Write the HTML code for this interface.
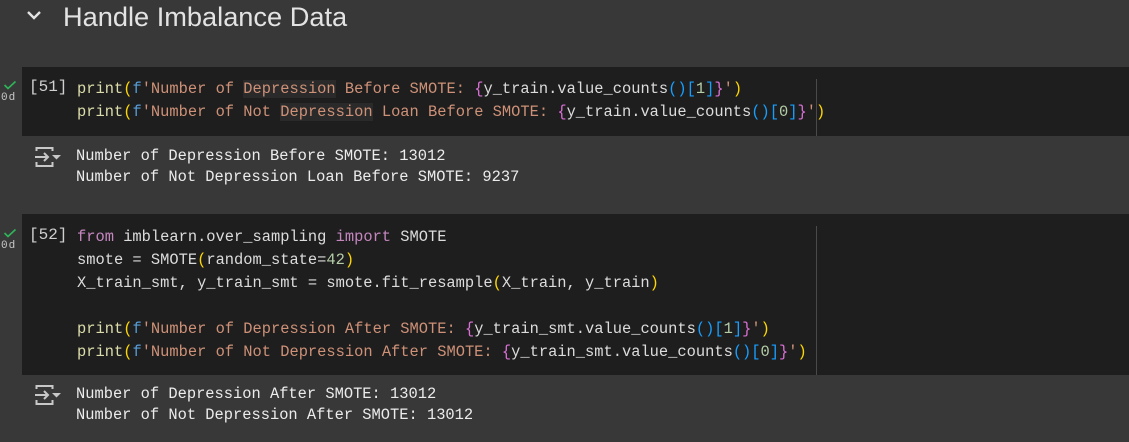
<!DOCTYPE html>
<html><head><meta charset="utf-8"><style>
body{margin:0;width:1129px;height:442px;background:#383838;overflow:hidden;position:relative;font-family:"Liberation Mono",monospace;}
.h{position:absolute;left:63px;top:0px;font-family:"Liberation Sans",sans-serif;font-size:27.2px;color:#e3e3e3;line-height:34px;}
.cell{position:absolute;left:22px;right:0;background:#1e1e1e;}
.ruler{position:absolute;left:816px;width:1px;background:#4a4a4a;}
.code{position:absolute;left:77px;font-size:15.4px;line-height:23px;color:#dcdcdc;white-space:pre;}
.out{position:absolute;left:76px;font-size:15.4px;line-height:21px;color:#ececec;white-space:pre;}
.num{position:absolute;left:29px;font-size:16px;color:#cfcfcf;}
.od{position:absolute;left:1px;font-size:11px;color:#c8c8c8;letter-spacing:1px;}
.fn{color:#dcdcaa}.p{color:#ffd700}.f{color:#569cd6}.s{color:#ce9178}.b{color:#da70d6}.bl{color:#179fff}.n{color:#b5cea8}.k{color:#c586c0}
.hl{background:#2a2a2a}
</style></head><body>
<svg style="position:absolute;left:26px;top:10px" width="16" height="11"><path d="M2 2 L8 8 L14 2" stroke="#e3e3e3" stroke-width="2.4" fill="none"/></svg>
<div class="h">Handle Imbalance Data</div>

<div class="cell" style="top:67px;height:69px"></div>
<div class="ruler" style="top:79px;height:57px"></div>
<svg style="position:absolute;left:3px;top:80px" width="14" height="10"><path d="M1.5 5 L5 8.5 L12.5 1.5" stroke="#2fb45a" stroke-width="1.6" fill="none"/></svg>
<div class="od" style="top:92px">0d</div>
<div class="num" style="top:78px">[51]</div>
<div class="code" style="top:78px"><span class="fn">print</span><span class="p">(</span><span class="f">f</span><span class="s">'Number of <span class="hl">Depression</span> Before SMOTE: </span><span class="b">{</span>y_train.value_counts<span class="bl">()[</span><span class="n">1</span><span class="bl">]</span><span class="b">}</span><span class="s">'</span><span class="p">)</span>
<span class="fn">print</span><span class="p">(</span><span class="f">f</span><span class="s">'Number of Not <span class="hl">Depression</span> Loan Before SMOTE: </span><span class="b">{</span>y_train.value_counts<span class="bl">()[</span><span class="n">0</span><span class="bl">]</span><span class="b">}</span><span class="s">'</span><span class="p">)</span></div>

<svg style="position:absolute;left:34px;top:146px" width="28" height="22" fill="none" stroke="#c8c8c8" stroke-width="2"><path d="M2.5 5 V2 H18.5 V5 M2.5 16 V20 H18.5 V16 M1 11 H14 M10 7 L14 11 L10 15"/><path d="M18 9 H27 L22.5 13.5 Z" fill="#c8c8c8" stroke="none"/></svg>
<div class="out" style="top:146px">Number of Depression Before SMOTE: 13012
Number of Not Depression Loan Before SMOTE: 9237</div>

<div class="cell" style="top:214px;height:161px"></div>
<div class="ruler" style="top:226px;height:149px"></div>
<svg style="position:absolute;left:3px;top:228px" width="14" height="10"><path d="M1.5 5 L5 8.5 L12.5 1.5" stroke="#2fb45a" stroke-width="1.6" fill="none"/></svg>
<div class="od" style="top:240px">0d</div>
<div class="num" style="top:226px">[52]</div>
<div class="code" style="top:226px"><span class="k">from</span> imblearn.over_sampling <span class="k">import</span> SMOTE
smote = SMOTE<span class="p">(</span>random_state=<span class="n">42</span><span class="p">)</span>
X_train_smt, y_train_smt = smote.fit_resample<span class="p">(</span>X_train, y_train<span class="p">)</span>

<span class="fn">print</span><span class="p">(</span><span class="f">f</span><span class="s">'Number of Depression After SMOTE: </span><span class="b">{</span>y_train_smt.value_counts<span class="bl">()[</span><span class="n">1</span><span class="bl">]</span><span class="b">}</span><span class="s">'</span><span class="p">)</span>
<span class="fn">print</span><span class="p">(</span><span class="f">f</span><span class="s">'Number of Not Depression After SMOTE: </span><span class="b">{</span>y_train_smt.value_counts<span class="bl">()[</span><span class="n">0</span><span class="bl">]</span><span class="b">}</span><span class="s">'</span><span class="p">)</span></div>

<svg style="position:absolute;left:34px;top:384px" width="28" height="22" fill="none" stroke="#c8c8c8" stroke-width="2"><path d="M2.5 5 V2 H18.5 V5 M2.5 16 V20 H18.5 V16 M1 11 H14 M10 7 L14 11 L10 15"/><path d="M18 9 H27 L22.5 13.5 Z" fill="#c8c8c8" stroke="none"/></svg>
<div class="out" style="top:384px">Number of Depression After SMOTE: 13012
Number of Not Depression After SMOTE: 13012</div>
</body></html>
